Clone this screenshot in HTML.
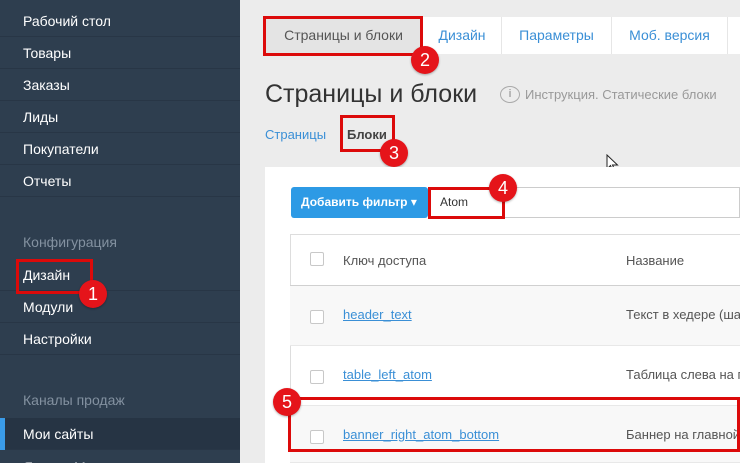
<!DOCTYPE html>
<html style="overflow:hidden;width:740px;height:463px"><head><meta charset="utf-8"><style>
*{box-sizing:border-box;margin:0;padding:0}
body{width:740px;height:463px;overflow:hidden;background:#ececec;font-family:"Liberation Sans","DejaVu Sans",sans-serif;position:relative}
.sb{position:absolute;left:0;top:0;width:240px;height:463px;background:#2e3e4f;overflow:hidden}
.it{position:absolute;left:0;width:240px;height:32px;border-bottom:1px solid #283646;color:#fff;font-size:14px;padding-left:23px;line-height:32px}
.gr{position:absolute;left:23px;color:#8391a0;font-size:14px}
.abs{position:absolute}
.red{position:absolute;border:3px solid #dc0a0a}
.num{position:absolute;width:28px;height:28px;border-radius:50%;background:#e5141a;color:#fff;font-size:18px;text-align:center;line-height:28px;box-shadow:0 1px 2px rgba(0,0,0,.3)}
.tab{position:absolute;top:17px;height:37px;background:#fff;border-right:1px solid #e6e6e6;color:#3a8fd6;font-size:14px;line-height:37px;text-align:center}
.row{position:absolute;left:290px;width:450px;border-bottom:1px solid #e8e8e8}
.cb{position:absolute;left:20px;width:14px;height:14px;border:1px solid #c8c8c8;border-radius:2px;background:#fff}
.lnk{position:absolute;left:53px;color:#3a8fd6;text-decoration:underline;font-size:13px}
.nm{position:absolute;left:336px;color:#555;font-size:13px;white-space:nowrap}
</style></head><body>
<div class="sb">
<div class="it" style="top:5px">Рабочий стол</div>
<div class="it" style="top:37px">Товары</div>
<div class="it" style="top:69px">Заказы</div>
<div class="it" style="top:101px">Лиды</div>
<div class="it" style="top:133px">Покупатели</div>
<div class="it" style="top:165px">Отчеты</div>
<div class="gr" style="top:234px">Конфигурация</div>
<div class="it" style="top:259px">Дизайн</div>
<div class="it" style="top:291px">Модули</div>
<div class="it" style="top:323px">Настройки</div>
<div class="gr" style="top:392px">Каналы продаж</div>
<div class="it" style="top:418px;background:#263444;height:32px">Мои сайты</div>
<div class="abs" style="left:0;top:418px;width:5px;height:32px;background:#3a9be8"></div>
<div class="it" style="top:451px;height:12px;border:none">Яндекс.Маркет</div>
</div>
<div class="red" style="left:16px;top:259px;width:77px;height:35px"></div>
<div class="num" style="left:79px;top:280px">1</div>

<div class="tab" style="left:265px;width:158px;background:#e4e4e4;color:#555">Страницы и блоки</div>
<div class="tab" style="left:423px;width:79px">Дизайн</div>
<div class="tab" style="left:502px;width:110px">Параметры</div>
<div class="tab" style="left:612px;width:116px">Моб. версия</div>
<div class="tab" style="left:728px;width:12px;border:none"></div>
<div class="red" style="left:263px;top:16px;width:160px;height:40px"></div>
<div class="num" style="left:411px;top:46px">2</div>

<div class="abs" style="left:265px;top:80px;font-size:25px;color:#333">Страницы и блоки</div>
<div class="abs" style="left:500px;top:86px;width:20px;height:17px;border:1.5px solid #aaa;border-radius:50%;color:#aaa;font-size:11px;text-align:center;line-height:14px;font-weight:bold">i</div>
<div class="abs" style="left:525px;top:87px;font-size:13px;color:#999">Инструкция. Статические блоки</div>
<div class="abs" style="left:265px;top:127px;font-size:13px;color:#3a8fd6">Страницы</div>
<div class="abs" style="left:347px;top:127px;font-size:13px;color:#444;font-weight:bold">Блоки</div>
<div class="red" style="left:340px;top:115px;width:55px;height:37px"></div>
<div class="num" style="left:380px;top:139px">3</div>
<svg class="abs" style="left:606px;top:154px" width="14" height="20" viewBox="0 0 14 20"><path d="M1 1 L1 15 L4.5 11.5 L7 17.5 L9 16.5 L6.5 11 L11.5 11 Z" fill="#fff" stroke="#222" stroke-width="1"/></svg>

<div class="abs" style="left:265px;top:167px;width:475px;height:296px;background:#fff"></div>
<div class="abs" style="left:291px;top:187px;width:137px;height:31px;background:#2d9ae5;border-radius:3px;color:#fff;font-size:12px;font-weight:bold;line-height:31px;padding-left:10px">Добавить фильтр ▾</div>
<div class="abs" style="left:428px;top:187px;width:312px;height:31px;border:1px solid #ccc;font-size:12px;color:#333;line-height:29px;padding-left:11px">Atom</div>
<div class="red" style="left:428px;top:187px;width:77px;height:32px"></div>
<div class="num" style="left:489px;top:174px">4</div>

<div class="abs" style="left:290px;top:234px;width:450px;height:229px;border:1px solid #ddd;border-right:none"></div>
<div class="row" style="top:234px;height:52px;border-bottom:1px solid #d0d0d0"><div class="cb" style="top:18px"></div><div class="abs" style="left:53px;top:19px;font-size:13px;color:#555">Ключ доступа</div><div class="abs" style="left:336px;top:19px;font-size:13px;color:#555">Название</div></div>
<div class="row" style="top:286px;height:60px;background:#f8f8f8"><div class="cb" style="top:24px"></div><div class="lnk" style="top:21px">header_text</div><div class="nm" style="top:21px">Текст в хедере (шаблон)</div></div>
<div class="row" style="top:346px;height:60px"><div class="cb" style="top:24px"></div><div class="lnk" style="top:21px">table_left_atom</div><div class="nm" style="top:21px">Таблица слева на главной</div></div>
<div class="row" style="top:406px;height:57px;background:#f8f8f8"><div class="cb" style="top:24px"></div><div class="lnk" style="top:21px">banner_right_atom_bottom</div><div class="nm" style="top:21px">Баннер на главной</div></div>
<div class="red" style="left:288px;top:397px;width:452px;height:55px"></div>
<div class="num" style="left:273px;top:388px">5</div>
</body></html>
